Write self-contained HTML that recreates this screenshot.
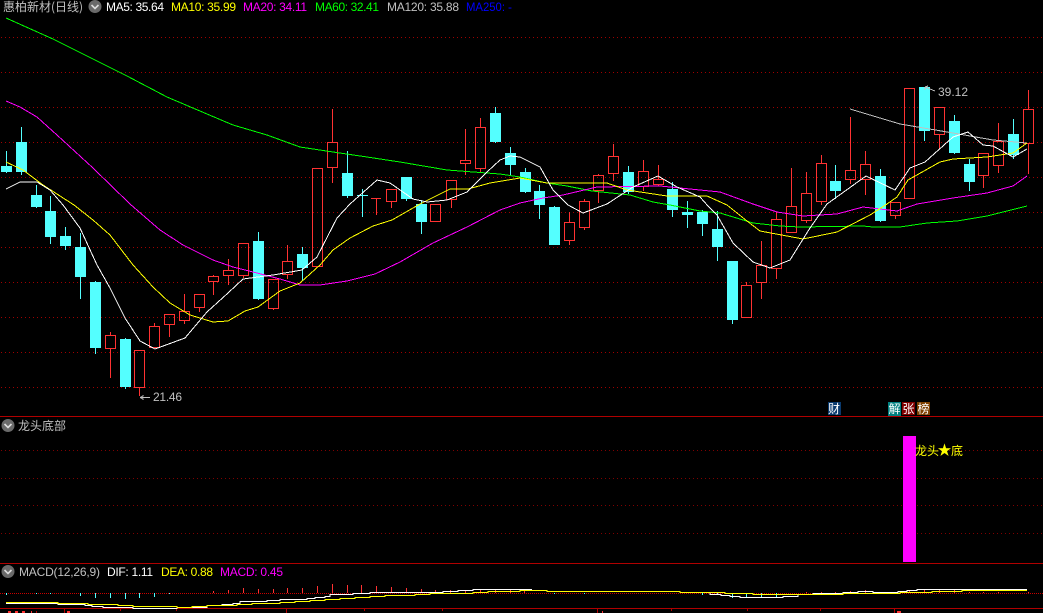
<!DOCTYPE html>
<html><head><meta charset="utf-8"><style>
html,body{margin:0;padding:0;background:#000;width:1043px;height:613px;overflow:hidden}
svg{display:block}
text{font-family:"Liberation Sans","WenQuanYi Zen Hei","Noto Sans CJK SC",sans-serif;font-size:12px}
.cj{font-family:"WenQuanYi Zen Hei","Noto Sans CJK SC",sans-serif}
</style></head><body>
<svg width="1043" height="613" viewBox="0 0 1043 613" xmlns="http://www.w3.org/2000/svg">
<defs>
<pattern id="d" patternUnits="userSpaceOnUse" x="0" y="0" width="4" height="1"><rect x="1" width="1" height="1" fill="#a00000"/></pattern>
<pattern id="e" patternUnits="userSpaceOnUse" x="0" y="0" width="4" height="1"><rect x="1" width="1" height="1" fill="#800000"/></pattern>
<pattern id="f" patternUnits="userSpaceOnUse" x="0" y="0" width="2" height="1"><rect width="1" height="1" fill="#c80000"/></pattern>
</defs>
<rect width="1043" height="613" fill="#000"/>
<g shape-rendering="crispEdges" fill="none">
<g fill="url(#d)">
<rect y="37" width="1043" height="1"/><rect y="72" width="1043" height="1"/><rect y="107" width="1043" height="1"/><rect y="142" width="1043" height="1"/><rect y="177" width="1043" height="1"/><rect y="212" width="1043" height="1"/><rect y="247" width="1043" height="1"/><rect y="282" width="1043" height="1"/><rect y="317" width="1043" height="1"/><rect y="352" width="1043" height="1"/><rect y="387" width="1043" height="1"/>
</g>
<g fill="url(#e)">
<rect y="450" width="1043" height="1"/><rect y="478" width="1043" height="1"/><rect y="505" width="1043" height="1"/><rect y="533" width="1043" height="1"/>
</g>
<rect y="593" width="1043" height="1" fill="url(#f)"/>
<path stroke="#b00000" d="M0 416.5H1043M0 563.5H1043M0 608.5H1043"/>
<path stroke="#b00000" d="M64.5 608V613M120.5 608V611M176.5 608V611M286.5 608V613M364.5 608V611M442.5 608V611M597.5 608V613M671.5 608V611M747.5 608V611M820.5 608V611M894.5 608V613M36.5 611V613"/>
<path fill="#ff3232" d="M8 611h3v2h-3zM15 611h3v2h-3zM22 611h3v2h-3zM31 611h1v2h-1zM67 611h3v2h-3zM602 611h1v2h-1zM897 611h4v2h-4z"/>

<!-- cyan wicks -->
<path stroke="#54ffff" d="M6.5 151V173M21.5 127V175M36.5 185V208M50.5 196V244M65.5 227V250M80.5 233V299M95.5 281V354M125.5 338V389M258.5 232V300M302.5 247V281M347.5 151V198M362.5 189V217M406.5 177V201M421.5 200V234M495.5 107V143M510.5 147V176M525.5 168V193M539.5 185V219M554.5 206V245M628.5 166V194M672.5 182V217M687.5 201V228M702.5 210V236M717.5 211V261M732.5 261V324M835.5 165V199M880.5 169V222M924.5 87V141M954.5 115V154M969.5 159V191M1013.5 119V159"/>
<!-- cyan bodies -->
<path fill="#54ffff" d="M1 166h11v6h-11zM16 142h11v30h-11zM31 195h11v12h-11zM45 211h11v26h-11zM60 236h11v10h-11zM75 247h11v30h-11zM90 282h11v66h-11zM120 339h11v48h-11zM253 241h11v58h-11zM297 254h11v14h-11zM342 173h11v23h-11zM357 195h11v1h-11zM401 177h11v22h-11zM416 204h11v18h-11zM490 113h11v29h-11zM505 153h11v12h-11zM520 172h11v20h-11zM534 191h11v14h-11zM549 207h11v38h-11zM623 172h11v20h-11zM667 189h11v21h-11zM682 212h11v3h-11zM697 212h11v12h-11zM712 229h11v18h-11zM727 261h11v59h-11zM830 181h11v10h-11zM875 176h11v45h-11zM919 87h11v44h-11zM949 121h11v32h-11zM964 164h11v18h-11zM1008 134h11v21h-11z"/>
<!-- red wicks -->
<path stroke="#ff3232" d="M110.5 332V335M110.5 349V378M139.5 388V396M154.5 323V326M169.5 325V337M184.5 294V311M184.5 321V324M199.5 308V312M213.5 275V276M213.5 282V295M228.5 259V270M228.5 276V285M243.5 276V278M273.5 309V310M287.5 245V261M287.5 275V279M332.5 109V142M332.5 168V183M376.5 198V215M391.5 202V208M451.5 200V208M465.5 129V160M465.5 164V175M480.5 118V127M480.5 169V172M569.5 212V222M569.5 241V245M584.5 199V201M584.5 228V230M598.5 174V175M598.5 191V203M613.5 144V156M613.5 174V181M643.5 160V171M643.5 187V191M658.5 165V179M658.5 185V186M746.5 282V285M761.5 241V265M761.5 283V299M776.5 212V219M776.5 269V279M791.5 168V206M806.5 172V193M806.5 221V223M821.5 155V163M821.5 202V205M850.5 117V170M850.5 180V184M865.5 151V164M865.5 180V195M895.5 216V219M939.5 135V149M983.5 176V188M998.5 123V141M998.5 166V173M1028.5 90V109M1028.5 144V174"/>
<!-- red bodies -->
<path stroke="#ff3232" d="M105.5 335.5h10v13h-10zM134.5 350.5h10v37h-10zM149.5 326.5h10v21h-10zM164.5 314.5h10v10h-10zM179.5 311.5h10v9h-10zM194.5 294.5h10v13h-10zM208.5 276.5h10v5h-10zM223.5 270.5h10v5h-10zM238.5 243.5h10v32h-10zM268.5 279.5h10v29h-10zM282.5 261.5h10v13h-10zM312.5 168.5h10v98h-10zM327.5 142.5h10v25h-10zM371 198.5h10M386.5 189.5h10v12h-10zM430.5 204.5h10v17h-10zM446.5 180.5h10v19h-10zM460.5 160.5h10v3h-10zM475.5 127.5h10v41h-10zM564.5 222.5h10v18h-10zM579.5 201.5h10v26h-10zM593.5 175.5h10v15h-10zM608.5 156.5h10v17h-10zM638.5 171.5h10v15h-10zM653.5 179.5h10v5h-10zM741.5 285.5h10v32h-10zM756.5 265.5h10v17h-10zM771.5 219.5h10v49h-10zM786.5 206.5h10v26h-10zM801.5 193.5h10v27h-10zM816.5 163.5h10v38h-10zM845.5 170.5h10v9h-10zM860.5 164.5h10v15h-10zM890.5 202.5h10v13h-10zM904.5 88.5h10v110h-10zM934.5 107.5h10v27h-10zM978.5 153.5h10v22h-10zM993.5 141.5h10v24h-10zM1023.5 109.5h10v34h-10z"/>

<!-- MA lines -->
<polyline stroke="#00ff00" points="6,18 53,39 93,59 127,76 167,97 207,114 233,125 267,135 300,147 333,152 367,157 400,162 447,170 500,174 520,177 547,183 567,186 592,191 630,195 653,202 670,205 700,211 720,213 753,223 780,226 800,227 863,226 873,227 900,227 927,223 957,221 987,216 1027,206"/>
<polyline stroke="#ff00ff" points="6,101 20,107 37,117 57,135 93,168 130,204 160,230 183,245 213,260 233,267 257,273 280,279 300,285 320,285 347,281 375,274 400,262 433,243 467,227 500,210 520,203 543,198 563,195 597,187 660,186 690,189 720,192 753,204 777,212 803,216 837,214 863,207 897,211 917,204 953,198 987,193 1013,186 1027,176"/>
<polyline stroke="#c0c0c0" points="850,109 900,124 953,133 993,140 1027,143"/>
<polyline stroke="#ffff00" points="6,162 23,170 43,185 74,205 93,220 110,235 133,265 153,287 170,303 190,315 213,322 228,321 245,311 258,307 280,291 300,283 320,265 333,250 350,238 373,226 392,220 420,204 450,189 468,189 490,183 520,178 547,183 607,183 627,190 667,196 707,196 727,205 747,221 760,231 787,236 803,239 837,232 870,215 887,204 897,197 908,180 940,162 953,159 987,157 1013,153 1027,143"/>
<polyline stroke="#ffffff" points="6,189 20,182 37,182 50,190 63,205 80,228 97,265 110,288 125,318 140,341 155,349 185,338 207,312 228,293 243,279 273,275 302,270 317,257 337,218 350,204 377,180 390,183 413,199 427,202 447,200 467,192 487,172 500,160 510,156 520,157 540,167 553,190 568,205 583,213 607,204 633,187 658,176 677,187 700,197 708,206 717,215 733,243 753,262 770,268 790,260 810,228 827,204 866,176 895,190 910,168 925,162 953,137 968,132 983,145 993,146 1013,157 1027,149"/>

<!-- panel bar -->
<rect x="903" y="436" width="13" height="126" fill="#ff00ff"/>

<!-- MACD hist -->
<path stroke="#54ffff" d="M6.5 593V595M36.5 593V594M50.5 593V594M80.5 593V596M95.5 593V598M110.5 593V598M125.5 593V599M139.5 593V598M154.5 593V597M169.5 593V594M554.5 593V594M584.5 593V594M702.5 593V595M717.5 593V594M732.5 593V598M746.5 593V598M761.5 593V597M776.5 593V597"/>
<path stroke="#ff3232" d="M213.5 591V593M228.5 590V593M243.5 588V593M258.5 589V593M273.5 589V593M287.5 588V593M302.5 588V593M317.5 586V593M332.5 584V593M347.5 585V593M361.5 585V593M376.5 586V593M391.5 587V593M406.5 588V593M421.5 589V593M435.5 590V593M450.5 590V593M465.5 590V593M480.5 589V593M495.5 589V593M510.5 590V593M524.5 591V593M806.5 592V593M821.5 592V593M835.5 592V593M850.5 591V593M865.5 590V593M880.5 592V593M895.5 592V593M909.5 590V593M924.5 590V593M939.5 589V593M954.5 590V593M969.5 592V593M983.5 592V593M998.5 592V593M1028.5 592V593"/>
<!-- MACD lines -->
<g transform="translate(0,.5)">
<path stroke="#fff" d="M6 603H58V604H85V605H92V606H103V607H133V608H177V607H207V605H222V604H233V603H240V601H267V600H280V599H307V598H315V597H325V596H330V594H353V593H370V592H443V591H458V590H473V589H532M680 592H710V594H721V595H730V596H740V597H783V596H798V594H813V593H843V592H858V591H873V592H898V591H907V590H917V589H1027"/>
<path stroke="#ffff00" d="M6 602H58V603H88V604H118V605H133V606H177V607H192V606H207V605H237V604H252V603H280V602H295V601H310V600H325V599H340V598H355V597H370V596H385V595H415V594H430V593H473V592H488V591H520V590H547V591H680V592H725V593H753V594H843V593H900V592H932V591H962V590H1027"/>
</g>

<!-- icons -->
<g shape-rendering="auto">
<circle cx="95" cy="6.5" r="6.5" fill="#6a6a6a"/><path d="M91.5 5l3.5 3.5 3.5-3.5" stroke="#ddd" stroke-width="1.6"/>
<circle cx="8" cy="425.5" r="6.5" fill="#6a6a6a"/><path d="M4.5 424l3.5 3.5 3.5-3.5" stroke="#ddd" stroke-width="1.6"/>
<circle cx="8" cy="571.5" r="6.5" fill="#6a6a6a"/><path d="M4.5 570l3.5 3.5 3.5-3.5" stroke="#ddd" stroke-width="1.6"/>
</g>

<!-- high / low arrows -->
<path stroke="#c0c0c0" d="M140 397.5H150M140.5 397.5l3 -2M140.5 397.5l3 2M925 87l10 4M925 87l3 -1M925 87v3"/>
<!-- tags -->
<rect x="828" y="402" width="13" height="13" fill="#0a3a6e"/>
<rect x="888" y="402" width="13" height="14" fill="#008080"/>
<rect x="902" y="402" width="13" height="13" fill="#800000"/>
<rect x="917" y="402" width="13" height="13" fill="#7f4000"/>
</g>

<text x="3" y="11" fill="#c0c0c0" class="cj" textLength="80">惠柏新材(日线)</text>
<text x="106" y="11" fill="#ffffff" textLength="58">MA5: 35.64</text>
<text x="171" y="11" fill="#ffff00" textLength="65">MA10: 35.99</text>
<text x="243" y="11" fill="#ff00ff" textLength="64">MA20: 34.11</text>
<text x="315" y="11" fill="#00ff00" textLength="64">MA60: 32.41</text>
<text x="387" y="11" fill="#c0c0c0" textLength="72">MA120: 35.88</text>
<text x="466" y="11" fill="#0000ff" textLength="39" lengthAdjust="spacingAndGlyphs">MA250:</text>
<text x="508" y="11" fill="#0000ff">-</text>

<text x="153" y="401" fill="#c0c0c0" textLength="29">21.46</text>
<text x="938" y="96" fill="#c0c0c0" textLength="30">39.12</text>

<text x="18" y="430" fill="#c0c0c0" class="cj">龙头底部</text>
<text y="455" fill="#ffff00" class="cj"><tspan x="915">龙头</tspan><tspan x="937.5" font-size="14">★</tspan><tspan x="951">底</tspan></text>

<text x="828" y="413" fill="#fff" class="cj">财</text>
<text x="888.5" y="413" fill="#fff" class="cj">解</text>
<text x="902.5" y="413" fill="#fff" class="cj">张</text>
<text x="917.5" y="413" fill="#fff" class="cj">榜</text>

<text x="19" y="576" fill="#c0c0c0" textLength="81">MACD(12,26,9)</text>
<text x="107" y="576" fill="#ffffff" textLength="46">DIF: 1.11</text>
<text x="161" y="576" fill="#ffff00" textLength="52">DEA: 0.88</text>
<text x="220" y="576" fill="#ff00ff" textLength="63">MACD: 0.45</text>
</svg>
</body></html>
